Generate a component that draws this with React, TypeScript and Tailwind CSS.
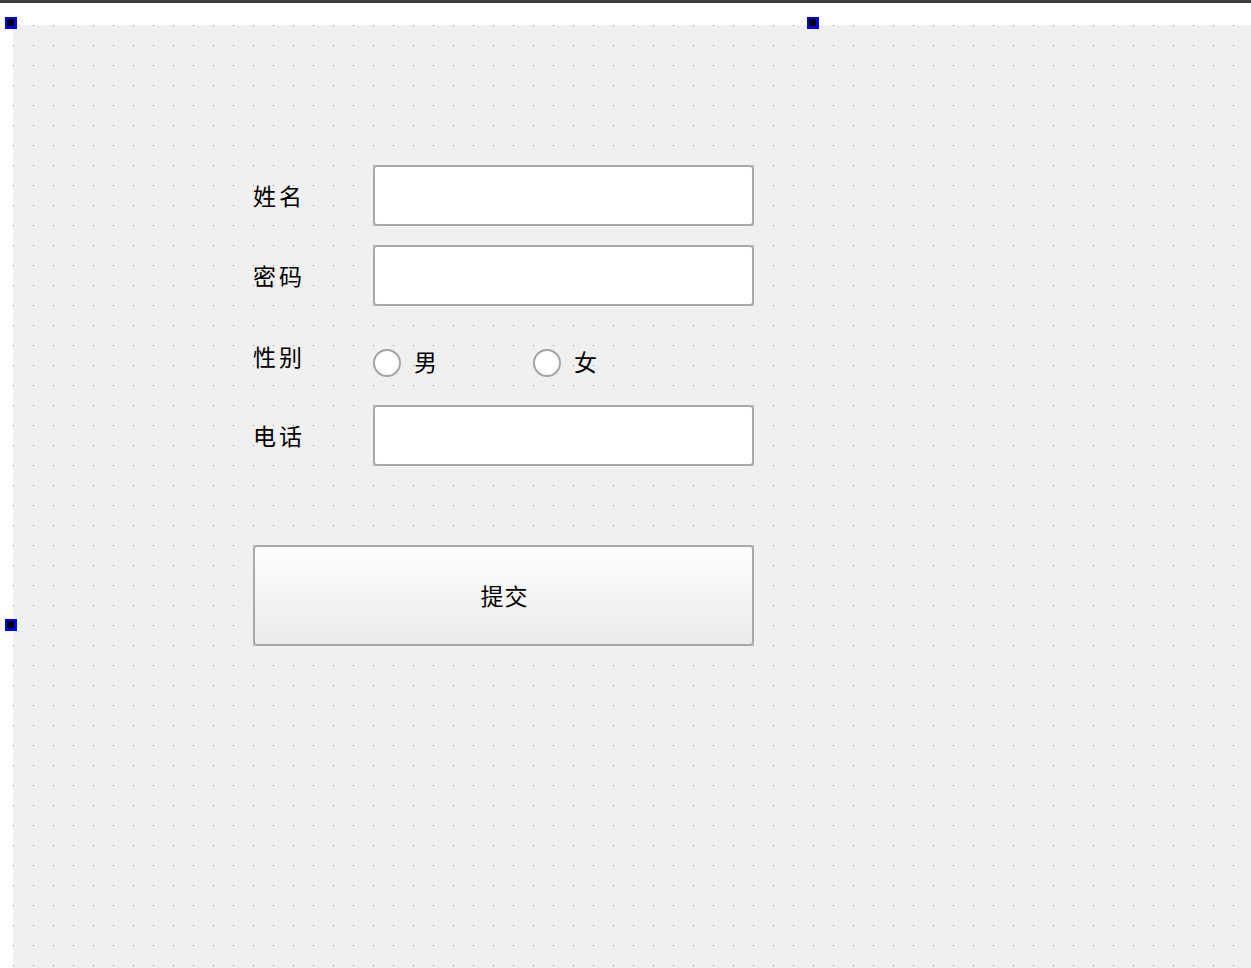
import React from "react";

const font = "font-['Liberation_Sans','Noto_Sans_CJK_SC',sans-serif]";

function Handle({ className }: { className: string }) {
  return (
    <div
      className={`absolute w-[12px] h-[12px] bg-black border-t-2 border-l-2 border-r-[3px] border-b-[3px] border-[#0000ff] ${className}`}
    />
  );
}

function TextRow({ label }: { label: string }) {
  return (
    <div className="flex items-center h-[61px]">
      <div className="w-[120px] pt-[3px] text-[23px] tracking-[3px] text-black leading-none">{label}</div>
      <div className="w-[381px] h-[61px] bg-white border-2 border-[#a8a8a8] rounded-[4px]" />
    </div>
  );
}

function Radio({ label }: { label: string }) {
  return (
    <div className="w-[160px] flex items-center">
      <div className="w-[28px] h-[28px] rounded-full bg-white border-2 border-[#a4a4a4]" />
      <span className="ml-[13px] pt-[1px] text-[23px] leading-none text-black">{label}</span>
    </div>
  );
}

export default function App() {
  return (
    <div className={`relative w-[1251px] h-[968px] bg-white overflow-hidden flex flex-col ${font}`}>
      <div className="h-[3px] bg-[#3c3c3c] shrink-0" />
      <div className="flex-1 flex pt-[22px] pl-[13px]">
        <div className="relative flex-1 bg-[#f0f0f0]">
          <svg className="absolute inset-0 w-full h-full" aria-hidden="true" shapeRendering="crispEdges">
            <defs>
              <pattern id="dots" x="0" y="0" width="20" height="20" patternUnits="userSpaceOnUse">
                <rect x="0" y="0" width="1" height="1" fill="#8e8e8e" />
              </pattern>
            </defs>
            <rect width="100%" height="100%" fill="url(#dots)" />
          </svg>
          <div className="relative pl-[240px] pt-[140px] flex flex-col">
            <div className="flex flex-col gap-[19px]">
              <TextRow label="姓名" />
              <TextRow label="密码" />
              <div className="flex items-start h-[61px]">
                <div className="w-[120px] text-[23px] tracking-[3px] text-black leading-none mt-[22px]">性别</div>
                <div className="flex mt-[24px]">
                  <Radio label="男" />
                  <Radio label="女" />
                </div>
              </div>
              <TextRow label="电话" />
            </div>
            <button className="mt-[79px] w-[501px] h-[101px] rounded-[4px] border-2 border-[#a8a8a8] bg-gradient-to-b from-[#fefefe] to-[#ebebeb] text-[23px] text-black flex items-center justify-center">
              <span className="pl-[2px] pt-[3px] leading-none tracking-[1px]">提交</span>
            </button>
          </div>
        </div>
      </div>
      <Handle className="left-[5px] top-[17px]" />
      <Handle className="left-[807px] top-[17px]" />
      <Handle className="left-[5px] top-[619px]" />
    </div>
  );
}
